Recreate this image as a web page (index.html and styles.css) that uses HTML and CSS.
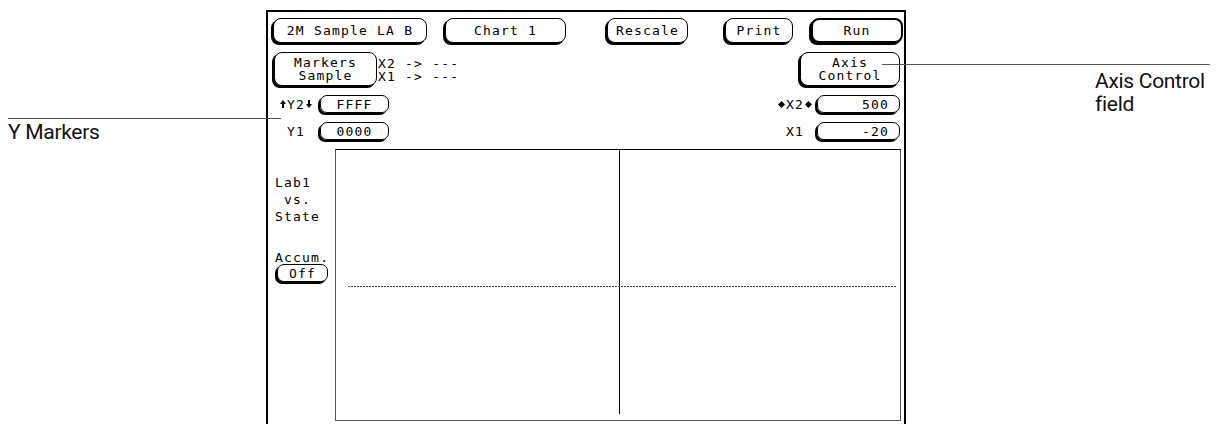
FILE: index.html
```html
<!DOCTYPE html>
<html lang="en">
<head>
  <meta charset="UTF-8">
  <title>Chart Display - Axis Control</title>
  <link rel="stylesheet" href="styles.css">
</head>
<body>
  <div class="page">
    <div class="note note-left">Y Markers</div>

    <div class="screen">
      <!-- top row of softkeys -->
      <div class="row row-top">
        <div class="key key-analyzer">2M Sample LA B</div>
        <div class="key key-chart">Chart 1</div>
        <div class="key key-rescale">Rescale</div>
        <div class="key key-print">Print</div>
        <div class="key key-run">Run</div>
      </div>

      <div class="row row-markers">
        <div class="key key-markers">Markers<br>Sample</div>
        <div class="marker-readout">X2 -&gt; ---<br>X1 -&gt; ---</div>
        <div class="key key-axis">Axis<br>Control</div>
      </div>

      <div class="row row-field">
        <div class="field-label y-label">
          <svg class="arrow" width="6" height="8" viewBox="0 0 6 8"><path d="M3 0 L6 4 L4 4 L4 8 L2 8 L2 4 L0 4 Z"/></svg>Y2<svg class="arrow" width="6" height="8" viewBox="0 0 6 8"><path d="M3 8 L6 4 L4 4 L4 0 L2 0 L2 4 L0 4 Z"/></svg>
        </div>
        <div class="field field-y">FFFF</div>
        <div class="spacer"></div>
        <div class="field-label x-label">
          <svg class="arrow" width="7" height="7" viewBox="0 0 7 7"><path d="M3.5 0 L7 3.5 L3.5 7 L0 3.5 Z"/></svg>X2<svg class="arrow" width="7" height="7" viewBox="0 0 7 7"><path d="M3.5 0 L7 3.5 L3.5 7 L0 3.5 Z"/></svg>
        </div>
        <div class="field field-x">500</div>
      </div>

      <div class="row row-field">
        <div class="field-label y-label">Y1</div>
        <div class="field field-y">0000</div>
        <div class="spacer"></div>
        <div class="field-label x-label">X1</div>
        <div class="field field-x">-20</div>
      </div>

      <div class="row row-chart">
        <div class="side-panel">
          <div class="side-title">Lab1
 vs.
State</div>
          <div class="side-accum">Accum.</div>
          <div class="key key-off">Off</div>
        </div>
        <div class="plot">
          <div class="plot-vline"></div>
          <div class="plot-hline"></div>
        </div>
      </div>
    </div>

    <div class="note note-right">Axis Control<br>field</div>

    <!-- callout lines -->
    <div class="callout callout-y"></div>
    <div class="callout callout-axis"></div>
  </div>
</body>
</html>
```

FILE: styles.css
```css
body {
  margin: 0;
  padding: 0;
  background: #fff;
  color: #000;
  font-family: Roboto, "Liberation Sans", sans-serif;
  overflow: hidden;
}

.page {
  position: relative;
  display: flex;
  height: 424px;
  padding-top: 10px;
  box-sizing: border-box;
}

.note {
  font-size: 21px;
  line-height: 23px;
  color: #111;
  letter-spacing: -0.3px;
}

.note-left {
  width: 258px;
  flex: none;
  padding: 111px 0 0 8px;
}

.note-right {
  flex: 1;
  padding: 60px 0 0 189px;
}

.callout {
  position: absolute;
  height: 1px;
  background: #555;
}

.callout-y {
  left: 8px;
  top: 118px;
  width: 273px;
}

.callout-axis {
  left: 882px;
  top: 64px;
  width: 328px;
}

/* instrument screen */
.screen {
  width: 640px;
  flex: none;
  box-sizing: border-box;
  border: 2px solid #000;
  border-bottom: none;
  display: flex;
  flex-direction: column;
  font-family: "DejaVu Sans Mono", "Liberation Mono", monospace;
  font-size: 13px;
  letter-spacing: 1.2px;
}

.row {
  display: flex;
  align-items: flex-start;
}

.row-top {
  padding-top: 6px;
}

.row-markers,
.row-field,
.row-chart {
  margin-top: 9px;
}

.key {
  box-sizing: border-box;
  height: 25px;
  border: 1px solid #000;
  border-radius: 8px;
  box-shadow: -2px 2px 0 #000;
  display: flex;
  align-items: center;
  justify-content: center;
  text-align: center;
  background: #fff;
  flex: none;
}

.key-analyzer { width: 154px; margin-left: 5px; }
.key-chart    { width: 121px; margin-left: 18px; }
.key-rescale  { width: 81px;  margin-left: 41px; }
.key-print    { width: 68px;  margin-left: 37px; }
.key-run      { width: 92px;  margin-left: 18px; border-width: 2px; }

.key-markers {
  width: 103px;
  height: 34px;
  margin-left: 6px;
  line-height: 13px;
}

.marker-readout {
  margin-left: 1px;
  padding-top: 5px;
  line-height: 13px;
  flex: 1;
}

.key-axis {
  width: 100px;
  height: 34px;
  margin-right: 4px;
  line-height: 13px;
}

.field-label {
  height: 18px;
  display: flex;
  align-items: center;
  justify-content: center;
  flex: none;
}

.y-label {
  width: 48px;
  margin-left: 4px;
}

.x-label {
  width: 44px;
}

.arrow {
  fill: #000;
  margin: 0 1px;
}

.field {
  box-sizing: border-box;
  height: 18px;
  border: 1px solid #000;
  border-radius: 7px;
  box-shadow: -2px 2px 0 #000;
  display: flex;
  align-items: center;
  flex: none;
}

.field-y {
  width: 69px;
  justify-content: center;
}

.field-x {
  width: 83px;
  justify-content: flex-end;
  padding-right: 10px;
  margin-right: 4px;
}

.spacer {
  flex: 1;
}

/* chart area */
.side-panel {
  width: 67px;
  flex: none;
  padding-top: 25px;
}

.side-title {
  white-space: pre;
  line-height: 17px;
  padding-left: 7px;
}

.side-accum {
  line-height: 12px;
  margin-top: 27px;
  padding-left: 7px;
}

.key-off {
  width: 51px;
  height: 18px;
  border-radius: 7px;
  margin: 0 0 0 9px;
}

.plot {
  position: relative;
  box-sizing: border-box;
  width: 566px;
  height: 272px;
  border: 1px solid #555;
  border-top-color: #000;
}

.plot-vline {
  position: absolute;
  left: 283px;
  top: 0;
  bottom: 6px;
  width: 1px;
  background: #000;
}

.plot-hline {
  position: absolute;
  left: 12px;
  right: 3px;
  top: 136px;
  height: 1px;
  background: repeating-linear-gradient(90deg, #444 0 2px, transparent 2px 3px);
}
```
